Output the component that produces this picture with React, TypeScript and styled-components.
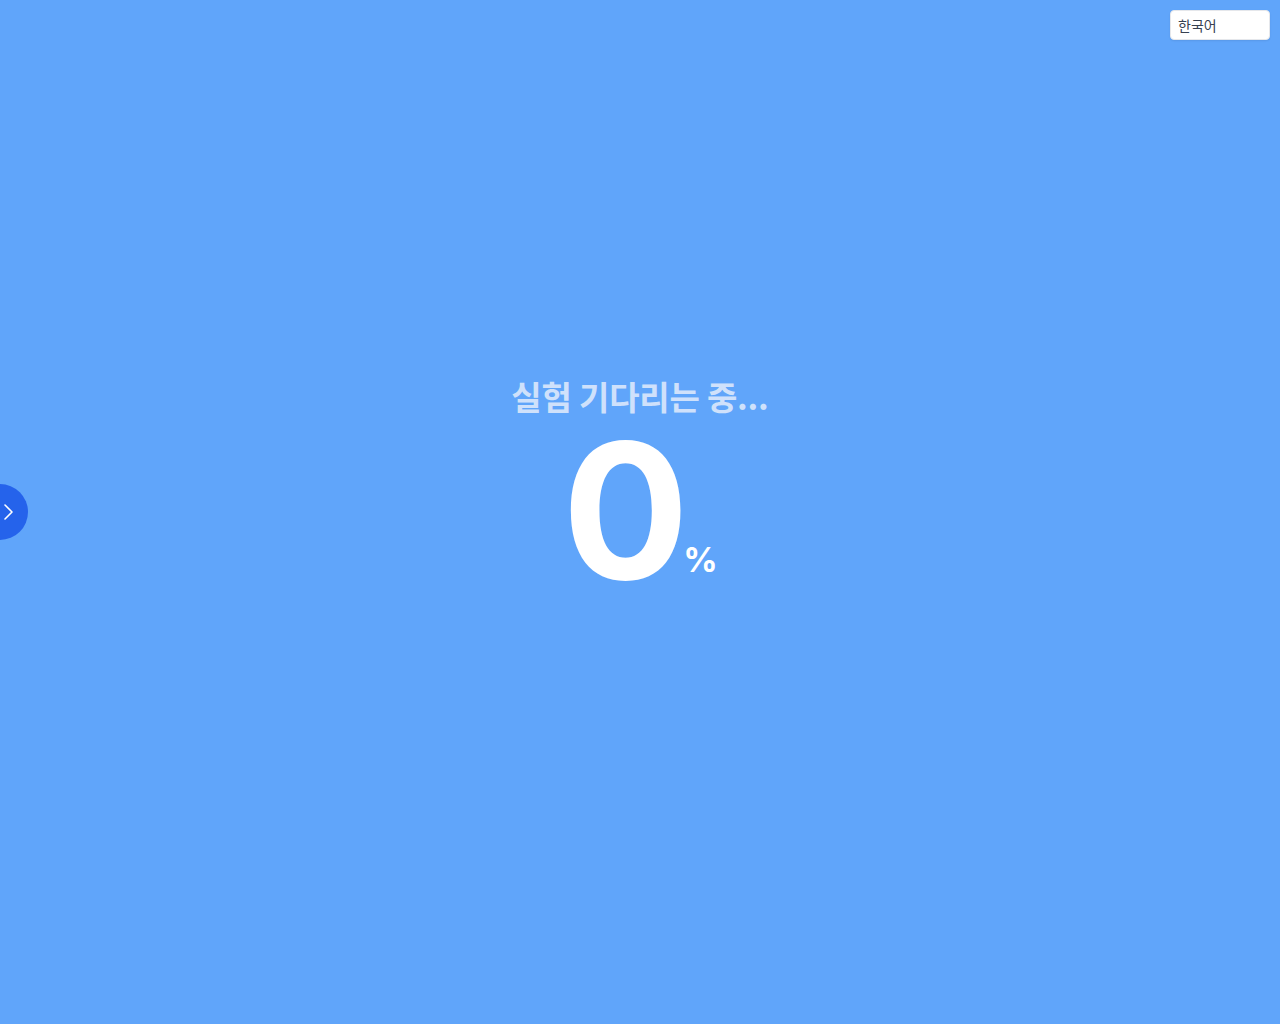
import React from "react";
import styled, { createGlobalStyle } from "styled-components";

const GlobalStyle = createGlobalStyle`
 html, body {
  margin: 0;
  padding: 0;
  height: 100%;
 }
 body {
  background: #60a5fa;
  font-family: Inter, "Noto Sans CJK KR", sans-serif;
 }
 #root {
  height: 100%;
 }
`;

const Page = styled.div`
 position: relative;
 width: 100%;
 height: 100vh;
 display: flex;
 align-items: center;
 justify-content: center;
 overflow: hidden;
`;

const LangSelect = styled.select`
 position: absolute;
 top: 10px;
 right: 10px;
 width: 100px;
 height: 30px;
 padding: 0 7px;
 border: 1px solid #e5e7eb;
 border-radius: 4px;
 background: #fff;
 color: #374151;
 font-family: "Noto Sans CJK KR", sans-serif;
 font-size: 14px;
 appearance: none;
 box-shadow: 0 1px 2px rgba(0, 0, 0, 0.08);
`;

const SideToggle = styled.button`
 position: absolute;
 left: -28px;
 top: 484px;
 width: 56px;
 height: 56px;
 border: none;
 border-radius: 50%;
 background: #2563eb;
 display: flex;
 align-items: center;
 justify-content: flex-end;
 padding: 0 14px 0 0;
 cursor: pointer;
`;

const Center = styled.div`
 display: flex;
 flex-direction: column;
 align-items: center;
 margin-bottom: 42px;
`;

const Title = styled.h1`
 margin: 0;
 font-family: "Noto Sans CJK KR", sans-serif;
 font-size: 33px;
 font-weight: 700;
 color: #cfe1fb;
 letter-spacing: -0.2px;
 line-height: 1.2;
`;

const Progress = styled.div`
 display: flex;
 align-items: flex-end;
`;

const Number = styled.span`
 font-family: Inter, sans-serif;
 font-size: 188px;
 font-weight: 700;
 color: #fff;
 line-height: 1;
`;

const Percent = styled.span`
 font-family: Inter, sans-serif;
 font-size: 34px;
 font-weight: 700;
 color: #fff;
 line-height: 1;
 margin-left: -6px;
 margin-bottom: 28px;
`;

export default function App() {
 return (
  <>
   <GlobalStyle />
   <Page>
    <LangSelect defaultValue="ko">
     <option value="ko">한국어</option>
     <option value="en">English</option>
    </LangSelect>
    <SideToggle aria-label="open">
     <svg width="12" height="18" viewBox="0 0 12 18" fill="none">
      <path d="M3 2l7 7-7 7" stroke="#fff" strokeWidth="1.6" strokeLinecap="round" strokeLinejoin="round" />
     </svg>
    </SideToggle>
    <Center>
     <Title>실험 기다리는 중...</Title>
     <Progress>
      <Number>0</Number>
      <Percent>%</Percent>
     </Progress>
    </Center>
   </Page>
  </>
 );
}
